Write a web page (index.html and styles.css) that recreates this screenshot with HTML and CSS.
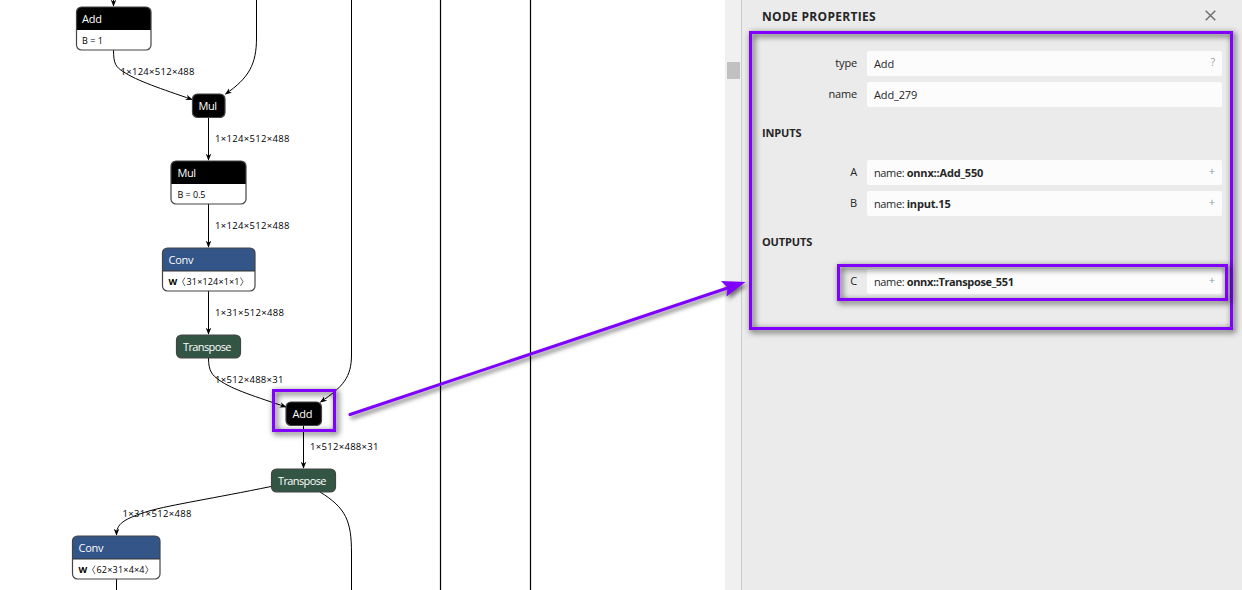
FILE: index.html
```
<!DOCTYPE html>
<html lang="en">
<head>
<meta charset="utf-8">
<title>Node Properties</title>
<link rel="stylesheet" href="styles.css">
</head>
<body>
<div class="app">
  <main class="graph">
    <svg class="canvas" width="725" height="590" viewBox="0 0 725 590">
      <defs>
        <marker id="arrow" viewBox="0 0 10 10" refX="9" refY="5" markerUnits="userSpaceOnUse" markerWidth="7" markerHeight="7" orient="auto"><path d="M0 1 L10 5 L0 9 L3 5 Z"/></marker>
      </defs>
      <g class="edges">
        <path d="M113.5 0V6" marker-end="url(#arrow)"/>
        <path d="M113.5 50C113.5 64 116 67 123 71.5C137 81 162 89 192 99.5" marker-end="url(#arrow)"/>
        <path d="M256.500 0V38C256.500 64 249 78 225.500 94" marker-end="url(#arrow)"/>
        <path d="M208.500 118V160" marker-end="url(#arrow)"/>
        <path d="M208.500 204V247" marker-end="url(#arrow)"/>
        <path d="M208.500 291V334" marker-end="url(#arrow)"/>
        <path d="M208.500 358C208.500 371 212 375 219 380C233 390 257 397 286 407" marker-end="url(#arrow)"/>
        <path d="M351.500 0V355C351.500 377 343 387 320.500 402" marker-end="url(#arrow)"/>
        <path d="M303.500 426V468" marker-end="url(#arrow)"/>
        <path d="M271 486.500C215 498 170 505 149 511C123 519 116.500 524 116.500 535" marker-end="url(#arrow)"/>
        <path d="M320 492C346 508 351.500 521 351.500 553V590"/>
        <path d="M116.500 579V590"/>
        <path class="trunk" d="M440.500 0V590M530.500 0V590"/>
      </g>
      <g class="labels">
        <text x="120.500" y="75" textLength="74">1×124×512×488</text>
        <text x="215" y="142" textLength="74.500">1×124×512×488</text>
        <text x="215" y="229" textLength="74.500">1×124×512×488</text>
        <text x="215" y="316" textLength="69">1×31×512×488</text>
        <text x="215" y="383" textLength="68.500">1×512×488×31</text>
        <text x="310" y="450" textLength="68.500">1×512×488×31</text>
        <text x="122.500" y="517" textLength="69">1×31×512×488</text>
      </g>
      <g class="nodes">
        <rect class="body" x="76.500" y="7" width="74.500" height="43" rx="5"/>
        <path d="M76.500 30V12a5 5 0 0 1 5-5h64.500a5 5 0 0 1 5 5V30Z"/>
        <rect class="outline" x="76.500" y="7" width="74.500" height="43" rx="5"/>
        <text x="82" y="23" textLength="20">Add</text>
        <text class="attr" x="82" y="44" textLength="21">B = 1</text>

        <rect x="192.500" y="94" width="32.500" height="23.500" rx="5"/>
        <rect class="outline" x="192.500" y="94" width="32.500" height="23.500" rx="5"/>
        <text x="198.500" y="110" textLength="18.500">Mul</text>

        <rect class="body" x="171" y="161" width="75" height="43" rx="5"/>
        <path d="M171 184V166a5 5 0 0 1 5-5h65a5 5 0 0 1 5 5V184Z"/>
        <rect class="outline" x="171" y="161" width="75" height="43" rx="5"/>
        <text x="177.500" y="177" textLength="18.500">Mul</text>
        <text class="attr" x="177.500" y="198" textLength="28">B = 0.5</text>

        <rect class="body" x="162.500" y="248" width="92.500" height="43" rx="5"/>
        <path class="layer" d="M162.500 271V253a5 5 0 0 1 5-5h82.500a5 5 0 0 1 5 5V271Z"/>
        <path class="divider" d="M162.500 271H255"/>
        <rect class="outline" x="162.500" y="248" width="92.500" height="43" rx="5"/>
        <text x="168.500" y="264" textLength="25">Conv</text>
        <text class="attr strong" x="168.500" y="285" textLength="9">W</text>
        <path class="angle" d="M185 277.500L182.500 281.700L185 286M240.500 277.500L243 281.700L240.500 286"/>
        <text class="attr" x="186.500" y="285" textLength="53">31×124×1×1</text>

        <rect class="transform" x="176.500" y="335" width="64" height="23" rx="5"/>
        <rect class="outline" x="176.500" y="335" width="64" height="23" rx="5"/>
        <text x="183" y="351" textLength="48.500">Transpose</text>

        <rect x="286" y="402" width="35.500" height="23.500" rx="5"/>
        <rect class="outline" x="286" y="402" width="35.500" height="23.500" rx="5"/>
        <text x="292.500" y="418" textLength="20">Add</text>

        <rect class="transform" x="271.500" y="469" width="64" height="23" rx="5"/>
        <rect class="outline" x="271.500" y="469" width="64" height="23" rx="5"/>
        <text x="278" y="485" textLength="48.500">Transpose</text>

        <rect class="body" x="72.500" y="536" width="87.500" height="43" rx="5"/>
        <path class="layer" d="M72.500 559V541a5 5 0 0 1 5-5h77.500a5 5 0 0 1 5 5V559Z"/>
        <path class="divider" d="M72.500 559H160"/>
        <rect class="outline" x="72.500" y="536" width="87.500" height="43" rx="5"/>
        <text x="78.500" y="552" textLength="25">Conv</text>
        <text class="attr strong" x="78.500" y="573" textLength="9">W</text>
        <path class="angle" d="M95 565.500L92.500 569.700L95 574M145.500 565.500L148 569.700L145.500 574"/>
        <text class="attr" x="96.500" y="573" textLength="48">62×31×4×4</text>
      </g>
    </svg>
  </main>
  <div class="scrollbar"><div class="thumb"></div></div>
  <aside class="sidebar">
    <header class="head">
      <h1 class="title">NODE PROPERTIES</h1>
      <svg class="close" width="11" height="11" viewBox="0 0 11 11"><path d="M.7.7L10.300 10.300M10.300.7L.7 10.300"/></svg>
    </header>
    <section class="group">
      <div class="row"><span class="key">type</span><div class="field"><span>Add</span><span class="action">?</span></div></div>
      <div class="row"><span class="key">name</span><div class="field"><span>Add_279</span></div></div>
    </section>
    <h2 class="section">INPUTS</h2>
    <section class="group">
      <div class="row"><span class="key">A</span><div class="field"><span class="value">name: <b class="short">onnx::Add_550</b></span><span class="action plus">+</span></div></div>
      <div class="row"><span class="key">B</span><div class="field"><span class="value">name: <b class="short">input.15</b></span><span class="action plus">+</span></div></div>
    </section>
    <h2 class="section">OUTPUTS</h2>
    <section class="group">
      <div class="row"><span class="key">C</span><div class="field"><span class="value">name: <b>onnx::Transpose_551</b></span><span class="action plus">+</span></div></div>
    </section>
  </aside>
  <svg class="annotations" width="1242" height="590" viewBox="0 0 1242 590">
    <rect class="frame" x="750.500" y="32.500" width="481" height="296"/>
    <rect class="frame" x="838.500" y="265.500" width="388" height="34"/>
    <rect class="frame" x="273.500" y="390.500" width="61" height="40"/>
    <g class="pointer">
      <path class="shaft" d="M350 414.500L729 287.500"/>
      <path class="tip" d="M745.500 282L721 281L727.500 287.500L726.500 296.500Z"/>
    </g>
  </svg>
</div>
</body>
</html>
```
FILE: styles.css
```
* { box-sizing: border-box; }
body { margin: 0; overflow: hidden; background: #fff; font-family: "Open Sans", "Noto Sans", sans-serif; }
.app { position: relative; display: flex; width: 1242px; height: 590px; }
.graph { width: 725px; background: #fff; }
.canvas { display: block; }
.edges path { fill: none; stroke: #000; stroke-width: 1; }
.edges .trunk { stroke-width: 1.2; }
#arrow path { fill: #000; stroke: none; }
.labels text { font-size: 9.5px; fill: #000; }
.nodes text { font-size: 11px; fill: #fff; }
.nodes .attr { font-size: 9px; fill: #000; }
.nodes .strong { font-weight: 700; }
.body { fill: #fff; }
.outline { fill: none; stroke: #444; stroke-width: 1.2; }
.layer { fill: #335588; }
.transform { fill: #335544; }
.divider { stroke: #333; }
.angle { fill: none; stroke: #222; stroke-width: .7; }

.scrollbar { width: 16px; padding: 62px 1px 0 2px; background: #f0f0f0; }
.thumb { height: 17px; background: #c1c1c1; }

.sidebar { width: 501px; padding: 0 20px; border-left: 1px solid #ccc; background: #ebebeb; color: #252525; font-size: 11px; }
.head { display: flex; align-items: center; justify-content: space-between; height: 33px; padding-right: 6px; }
.title { margin: 0; font-size: 12px; font-weight: 700; letter-spacing: .3px; }
.close { margin-top: -2px; }
.close path { stroke: #707070; stroke-width: 1.5; }
.group { display: flex; flex-direction: column; gap: 6px; padding-top: 18px; }
.row { display: flex; height: 25px; }
.key { width: 95px; margin-right: 10px; text-align: right; line-height: 24px; letter-spacing: -.15px; }
.field { display: flex; flex: 1; justify-content: space-between; padding: 0 7px; border-radius: 2px; background: #fcfcfc; line-height: 26px; letter-spacing: -.15px; white-space: pre; }
.value { letter-spacing: -.38px; }
.field b { font-weight: 700; letter-spacing: -.36px; }
.field .short { letter-spacing: -.18px; }
.action { color: #999; font-size: 10px; line-height: 23px; }
.plus { color: #8995a5; font-size: 11px; line-height: 22px; }
.section { height: 15px; margin: 18px 0 0; font-size: 11px; line-height: 16px; font-weight: 700; letter-spacing: -.15px; }
.section + .group { padding-top: 20px; }

.annotations { position: absolute; inset: 0; pointer-events: none; }
.frame { fill: none; stroke: #7f00ff; stroke-width: 3; filter: drop-shadow(2px 2px 3px rgba(0, 0, 0, .8)); }
.pointer { filter: drop-shadow(2px 3px 2px rgba(0, 0, 0, .55)); }
.shaft { fill: none; stroke: #7f00ff; stroke-width: 3; stroke-linecap: round; }
.tip { fill: #7f00ff; }
```
